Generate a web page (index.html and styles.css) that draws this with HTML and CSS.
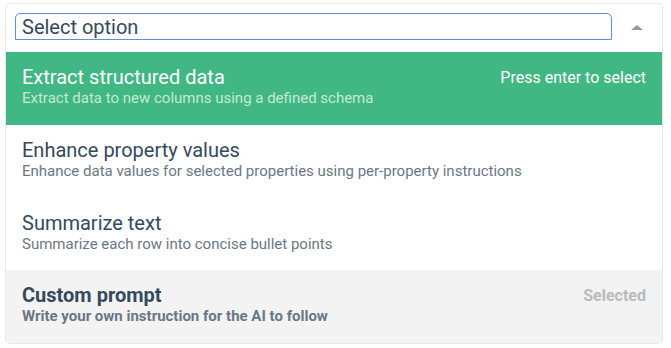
FILE: index.html
```html
<!DOCTYPE html>
<html lang="en">
<head>
    <meta charset="UTF-8">
    <meta name="viewport" content="width=device-width, initial-scale=1.0">
    <title>Select option</title>
    <link rel="stylesheet" href="styles.css">
</head>
<body>
    <div class="multiselect">
        <!-- Campo de busca -->
        <div class="multiselect-head">
            <input class="multiselect-input" type="text" placeholder="Select option">
            <div class="multiselect-select"><span class="caret"></span></div>
        </div>

        <!-- Lista de opções -->
        <ul class="options">
            <li class="option highlight">
                <div class="option-top">
                    <span class="option-title">Extract structured data</span>
                    <span class="option-hint">Press enter to select</span>
                </div>
                <div class="option-desc">Extract data to new columns using a defined schema</div>
            </li>
            <li class="option">
                <div class="option-top">
                    <span class="option-title">Enhance property values</span>
                </div>
                <div class="option-desc">Enhance data values for selected properties using per-property instructions</div>
            </li>
            <li class="option">
                <div class="option-top">
                    <span class="option-title">Summarize text</span>
                </div>
                <div class="option-desc">Summarize each row into concise bullet points</div>
            </li>
            <li class="option selected">
                <div class="option-top">
                    <span class="option-title">Custom prompt</span>
                    <span class="option-hint">Selected</span>
                </div>
                <div class="option-desc">Write your own instruction for the AI to follow</div>
            </li>
        </ul>
    </div>
</body>
</html>
```

FILE: styles.css
```css
* {
    margin: 0;
    padding: 0;
    box-sizing: border-box;
    font-family: Roboto, "Liberation Sans", sans-serif;
}

body {
    background-color: #fff;
    color: #35495e;
    padding: 3px 0 0 5px;
}

.multiselect {
    width: 658px;
    background: #fff;
    border: 1px solid #e8e8e8;
    border-radius: 5px;
    overflow: hidden;
}

.multiselect-head {
    display: flex;
    align-items: center;
    padding: 9px 0 12px 9px;
}

.multiselect-input {
    flex: 1;
    height: 27px;
    border: 1px solid #5b8dee;
    border-radius: 5px 5px 0 0;
    padding: 0 6px;
    font-size: 20px;
    color: #35495e;
    outline: none;
}

.multiselect-input::placeholder {
    color: #35495e;
    opacity: 1;
}

.multiselect-select {
    width: 50px;
    display: flex;
    justify-content: center;
    padding-top: 2px;
}

.caret {
    width: 0;
    height: 0;
    border-style: solid;
    border-width: 0 6px 5px;
    border-color: transparent transparent #999;
}

.options {
    list-style: none;
}

.option {
    height: 72.75px;
    padding: 13px 16px 0;
}

.option-top {
    display: flex;
    justify-content: space-between;
    align-items: baseline;
}

.option-title {
    font-size: 20px;
    line-height: 24px;
}

.option-hint {
    font-size: 16px;
    position: relative;
    top: -1px;
}

.option-desc {
    font-size: 15px;
    line-height: 18px;
    color: #6b7785;
}

/* Opção destacada */
.highlight {
    background-color: #41b883;
    color: #fff;
}

.highlight .option-desc {
    color: rgba(255, 255, 255, 0.7);
}

/* Opção selecionada */
.selected {
    background-color: #f3f3f3;
    font-weight: bold;
}

.selected .option-hint {
    color: #bbb;
}
```
